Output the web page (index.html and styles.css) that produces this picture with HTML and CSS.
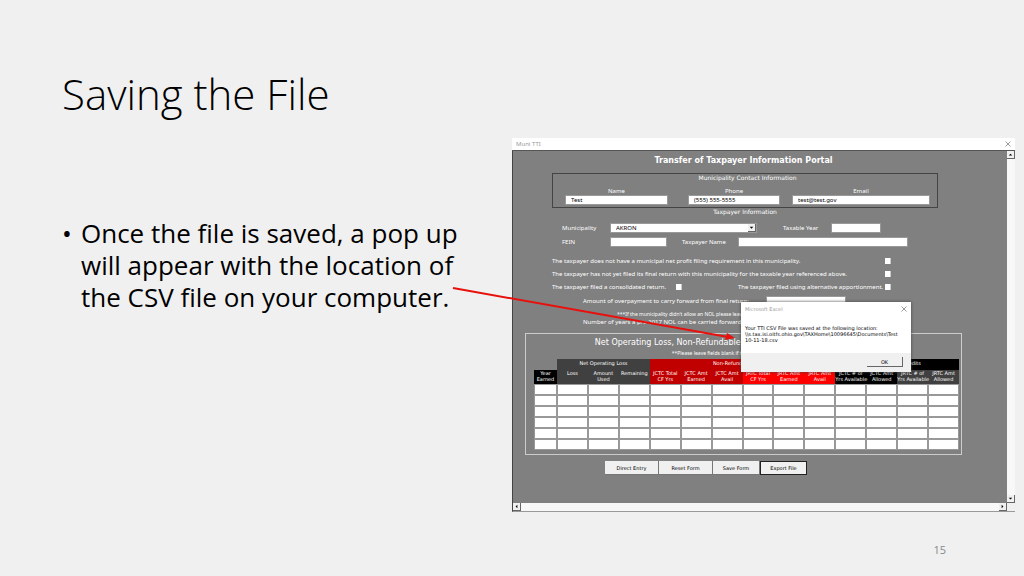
FILE: index.html
```
<!DOCTYPE html>
<html lang="en">
<head>
<meta charset="UTF-8">
<title>Saving the File</title>
<link rel="stylesheet" href="styles.css">
<script>
	var rowCnt = 6;
	var cols = ['Year Earned', 'Loss', 'Amount Used', 'Remaining',
		'JCTC Total CF Yrs', 'JCTC Amt Earned', 'JCTC Amt Avail',
		'JRTC Total CF Yrs', 'JRTC Amt Earned', 'JRTC Amt Avail',
		'JCTC # of Yrs Available', 'JCTC Amt Allowed',
		'JRTC # of Yrs Available', 'JRTC Amt Allowed'];

	window.onload=function(){
		makeRows();
	}

	function makeRows(){
		var rows = '';
		for(var i=0; i<rowCnt; i++){
			rows += '<tr>';
			for(var j=0; j<cols.length; j++){
				rows += '<td><input type="text" class="cell" aria-label="'+cols[j]+' '+(i+1)+'"></td>';
			}
			rows += '</tr>';
		}
		document.getElementById('credit_rows').innerHTML = rows;
	}
</script>
</head>
<body>
<main class="slide">
	<h1 class="title">Saving the File</h1>

	<div class="content">
		<ul class="bullets">
			<li>Once the file is saved, a pop up will appear with the location of the CSV file on your computer.</li>
		</ul>

		<div class="window">
			<div class="title_bar">
				<span>Muni TTI</span>
				<button class="close" type="button" aria-label="Close">
					<svg viewBox="0 0 6 6"><path d="M0.5 0.5 5.5 5.5M5.5 0.5 0.5 5.5"/></svg>
				</button>
			</div>

			<div class="window_body">
				<form class="portal">
					<h2 class="portal_title">Transfer of Taxpayer Information Portal</h2>

					<div class="upper">
						<fieldset class="contact">
							<h3 class="section_title">Municipality Contact Information</h3>
							<div class="contact_fields">
								<label for="name">Name</label>
								<label class="phone_label" for="phone">Phone</label>
								<label for="email">Email</label>
								<input id="name" class="field" type="text" value="Test">
								<input id="phone" class="field phone" type="text" value="(555) 555-5555">
								<input id="email" class="field" type="text" value="test@test.gov">
							</div>
						</fieldset>

						<h3 class="section_title">Taxpayer Information</h3>
						<div class="row muni_row">
							<label for="muni">Municipality</label>
							<div class="select_box">
								<select id="muni" class="field"><option>AKRON</option></select>
								<svg class="select_arrow" viewBox="0 0 8 8"><path d="M2 3h4L4 5.500z"/></svg>
							</div>
							<label class="second" for="year">Taxable Year</label>
							<input id="year" class="field" type="text">
						</div>
						<div class="row fein_row">
							<label for="fein">FEIN</label>
							<input id="fein" class="field" type="text">
							<label class="second" for="taxpayer">Taxpayer Name</label>
							<input id="taxpayer" class="field" type="text">
						</div>

						<div class="checks">
							<div class="check">
								<label for="c1">The taxpayer does not have a municipal net profit filing requirement in this municipality.</label>
								<input id="c1" type="checkbox">
							</div>
							<div class="check">
								<label for="c2">The taxpayer has not yet filed its final return with this municipality for the taxable year referenced above.</label>
								<input id="c2" type="checkbox">
							</div>
							<div class="check double">
								<label for="c3">The taxpayer filed a consolidated return.</label>
								<input id="c3" type="checkbox">
								<label for="c4">The taxpayer filed using alternative apportionment.</label>
								<input id="c4" type="checkbox">
							</div>
						</div>

						<div class="carry">
							<div class="carry_row">
								<label for="over">Amount of overpayment to carry forward from final return:</label>
								<input id="over" class="field" type="text">
							</div>
							<p class="note carry_note">***If the municipality didn't allow an NOL please leave</p>
							<p>Number of years a pre-2017 NOL can be carried forward</p>
						</div>
					</div>

					<section class="credits">
						<div class="credits_intro">
							<h3 class="credits_title">Net Operating Loss, Non-Refundable Credits, and Refundable Credits</h3>
							<p class="note">**Please leave fields blank if they are not applicable</p>
						</div>
						<table>
							<colgroup><col class="year_col"><col span="13"></colgroup>
							<thead>
								<tr class="groups">
									<td></td>
									<th class="grey" colspan="3">Net Operating Loss</th>
									<th class="dark_red" colspan="6">Non-Refundable Credits</th>
									<th class="black" colspan="4">Refundable Credits</th>
								</tr>
								<tr class="heads">
									<th class="black">Year<br>Earned</th>
									<th class="grey">Loss</th>
									<th class="grey">Amount<br>Used</th>
									<th class="grey">Remaining</th>
									<th class="dark_red">JCTC Total<br>CF Yrs</th>
									<th class="dark_red">JCTC Amt<br>Earned</th>
									<th class="dark_red">JCTC Amt<br>Avail</th>
									<th class="red">JRTC Total<br>CF Yrs</th>
									<th class="red">JRTC Amt<br>Earned</th>
									<th class="red">JRTC Amt<br>Avail</th>
									<th class="black">JCTC # of<br>Yrs Available</th>
									<th class="black">JCTC Amt<br>Allowed</th>
									<th class="grey">JRTC # of<br>Yrs Available</th>
									<th class="grey">JRTC Amt<br>Allowed</th>
								</tr>
							</thead>
							<tbody id="credit_rows"></tbody>
						</table>
					</section>

					<div class="buttons">
						<button class="btn wide" type="button">Direct Entry</button>
						<button class="btn wide" type="button">Reset Form</button>
						<button class="btn" type="button">Save Form</button>
						<button class="btn focused" type="button">Export File</button>
					</div>
				</form>

				<div class="scroll vertical">
					<button type="button" aria-label="Scroll up"><svg viewBox="0 0 8 8"><path d="M2 5h4L4 3z"/></svg></button>
					<button type="button" aria-label="Scroll down"><svg viewBox="0 0 8 8"><path d="M2 3h4L4 5z"/></svg></button>
				</div>
				<div class="scroll horizontal">
					<button type="button" aria-label="Scroll left"><svg viewBox="0 0 8 8"><path d="M5 2v4L3 4z"/></svg></button>
					<button type="button" aria-label="Scroll right"><svg viewBox="0 0 8 8"><path d="M3 2v4L5 4z"/></svg></button>
				</div>
			</div>

			<div class="dialog" role="dialog" aria-label="Microsoft Excel">
				<div class="dialog_bar">
					<span>Microsoft Excel</span>
					<button class="close" type="button" aria-label="Close">
						<svg viewBox="0 0 6 6"><path d="M0.5 0.5 5.5 5.5M5.5 0.5 0.5 5.5"/></svg>
					</button>
				</div>
				<p class="message">Your TTI CSV File was saved at the following location:<br>\\s.tax.isi.oitfs.ohio.gov\TAXHome\10096645\Documents\Test<br>10-11-18.csv</p>
				<div class="dialog_foot">
					<button class="ok" type="button">OK</button>
				</div>
			</div>

			<svg class="arrow" viewBox="0 0 288 56">
				<path class="line" d="M1 2 276 51"/>
				<path class="head" d="M283 52 273 54 275 47z"/>
			</svg>
		</div>
	</div>

	<footer class="page_number">15</footer>
</main>
</body>
</html>
```
FILE: styles.css
```
*{
	margin:0;
	padding:0;
	box-sizing:border-box;
}
body{
	background-color:#f0f0f0;
	color:#000;
}
button, input, select{
	font:inherit;
	color:inherit;
	border:0;
	border-radius:0;
}
.slide{
	padding:64px 9px 0 62px;
}
.title{
	font-family:"Open Sans", sans-serif;
	font-weight:300;
	font-size:42px;
	line-height:60px;
}
.content{
	display:grid;
	grid-template-columns:450fr 503fr;
	margin-top:14px;
}
.bullets{
	list-style:none;
	padding:79px 40px 0 19px;
	font-family:"Open Sans", sans-serif;
	font-size:26px;
	line-height:32px;
}
.bullets li::before{
	content:"•";
	float:left;
	margin-left:-19px;
}

/* form window */
.window{
	position:relative;
	font-family:"Noto Sans", sans-serif;
	font-size:6px;
	line-height:8px;
}
.title_bar{
	display:flex;
	justify-content:space-between;
	align-items:center;
	height:13px;
	padding:0 4px;
	background-color:#fff;
	border-bottom:1px solid #555;
	color:#999;
}
.close{
	display:flex;
	background:none;
}
.close svg{
	width:6px;
	height:6px;
	fill:none;
	stroke:#999;
	stroke-width:1;
}
.window_body{
	display:grid;
	grid-template-columns:1fr 8px;
	border-left:1px solid #444;
	border-bottom:1px solid #999;
}
.portal{
	padding:0 45px 28px 12px;
	background-color:#808080;
	color:#fff;
}
.portal_title{
	font-family:"DejaVu Sans", sans-serif;
	font-size:8px;
	line-height:20px;
	text-align:center;
}
.upper{
	padding:0 24px 0 27px;
}
.contact{
	margin-top:2px;
	padding:0 7px 2px 12px;
	border:1px solid #444;
}
.section_title{
	font-family:"DejaVu Sans", sans-serif;
	font-size:6px;
	font-weight:normal;
	text-align:center;
}
.contact_fields{
	display:grid;
	grid-template-columns:103fr 100fr 138fr;
	column-gap:12px;
	margin-top:5px;
	text-align:center;
}
.field{
	width:100%;
	min-width:0;
	height:10px;
	padding:0 5px;
	background-color:#fff;
	border:1px solid #999;
	color:#000;
}
.phone{
	width:auto;
	margin-left:8px;
}
.phone_label{
	padding-left:8px;
}
.row{
	display:grid;
	align-items:center;
	margin-top:4px;
	padding-left:10px;
}
.muni_row{
	grid-template-columns:48fr 147fr 74fr 50fr 57fr;
	margin-top:7px;
}
.fein_row{
	grid-template-columns:48fr 57fr 71fr 170fr 30fr;
}
.muni_row .second{
	padding-left:26px;
}
.fein_row .second{
	padding-left:15px;
}
.select_box{
	position:relative;
}
.select_box select{
	display:block;
	appearance:none;
}
.select_arrow{
	position:absolute;
	top:1px;
	right:1px;
	width:8px;
	height:8px;
	background-color:#f0f0f0;
	border-right:1px solid #666;
	border-bottom:1px solid #666;
}
.checks{
	margin-top:7px;
	padding-right:47px;
}
.check{
	display:flex;
	justify-content:space-between;
	align-items:center;
	height:13px;
	white-space:nowrap;
}
.double{
	display:grid;
	grid-template-columns:124fr 62fr 147fr 6fr;
}
.check input{
	appearance:none;
	width:6px;
	height:6px;
	background-color:#fff;
	border-right:1px solid #ccc;
}
.carry{
	margin-top:1px;
	padding:0 92px 0 31px;
	white-space:nowrap;
}
.carry_row{
	display:grid;
	grid-template-columns:183fr 80fr;
	align-items:center;
	height:14px;
}
.note{
	font-size:5px;
	line-height:8px;
}
.carry_note{
	margin-top:2px;
	padding-left:34px;
}

/* credits table */
.credits{
	margin-top:7px;
	padding:3px 2px 4px 8px;
	border:1px solid #ccc;
	text-align:center;
}
.credits_intro{
	padding-right:28px;
}
.credits_title{
	font-family:"DejaVu Sans", sans-serif;
	font-size:8px;
	font-weight:normal;
	line-height:12px;
	white-space:nowrap;
}
table{
	width:100%;
	margin-top:2px;
	table-layout:fixed;
	border-collapse:collapse;
	font-family:"DejaVu Sans", sans-serif;
	font-size:5px;
}
.year_col{
	width:23px;
}
th{
	font-weight:normal;
	line-height:6px;
	vertical-align:top;
	white-space:nowrap;
}
.groups th{
	height:11px;
	padding-top:1px;
}
.heads th{
	height:14px;
}
.black{
	background-color:#000;
}
.grey{
	background-color:#404040;
}
.dark_red{
	background-color:#c00000;
}
.red{
	background-color:#f00;
}
td{
	line-height:0;
}
.cell{
	width:100%;
	height:11px;
	background-color:#fff;
	border:1px solid #999;
	color:#000;
}
.buttons{
	display:flex;
	margin:6px 0 0 80px;
	font-family:"DejaVu Sans", sans-serif;
	font-size:5px;
}
.btn{
	width:47px;
	height:14px;
	background-color:#f0f0f0;
	border-right:1px solid #777;
	border-bottom:1px solid #777;
	color:#000;
}
.wide{
	width:54px;
}
.focused{
	border:1px solid #222;
}

/* scroll bars */
.scroll{
	display:flex;
	justify-content:space-between;
	background-color:#f8f8f8;
}
.vertical{
	flex-direction:column;
}
.scroll button{
	display:flex;
	width:8px;
	height:8px;
	background-color:#f0f0f0;
	border-right:1px solid #666;
	border-bottom:1px solid #666;
}

/* message box */
.dialog{
	position:absolute;
	top:164px;
	left:229px;
	width:170px;
	background-color:#fff;
	box-shadow:0 0 3px #444;
	font-family:"DejaVu Sans", sans-serif;
	font-size:5px;
}
.dialog_bar{
	display:flex;
	justify-content:space-between;
	align-items:center;
	height:14px;
	padding:0 4px;
	color:#999;
}
.message{
	padding:9px 4px 10px;
	line-height:6px;
	white-space:nowrap;
}
.dialog_foot{
	display:flex;
	justify-content:flex-end;
	padding:4px 8px 5px;
	background-color:#f0f0f0;
}
.ok{
	width:36px;
	height:10px;
	background-color:#f0f0f0;
	border-right:1px solid #666;
	border-bottom:1px solid #666;
}
.arrow{
	position:absolute;
	top:148px;
	left:-60px;
	width:288px;
	height:56px;
}
.line{
	fill:none;
	stroke:#e8100c;
	stroke-width:2;
}
.head{
	fill:#e8100c;
}
.page_number{
	margin-top:30px;
	padding-right:69px;
	font-family:"Open Sans", sans-serif;
	font-size:11px;
	line-height:16px;
	text-align:right;
	color:#888;
}
```
